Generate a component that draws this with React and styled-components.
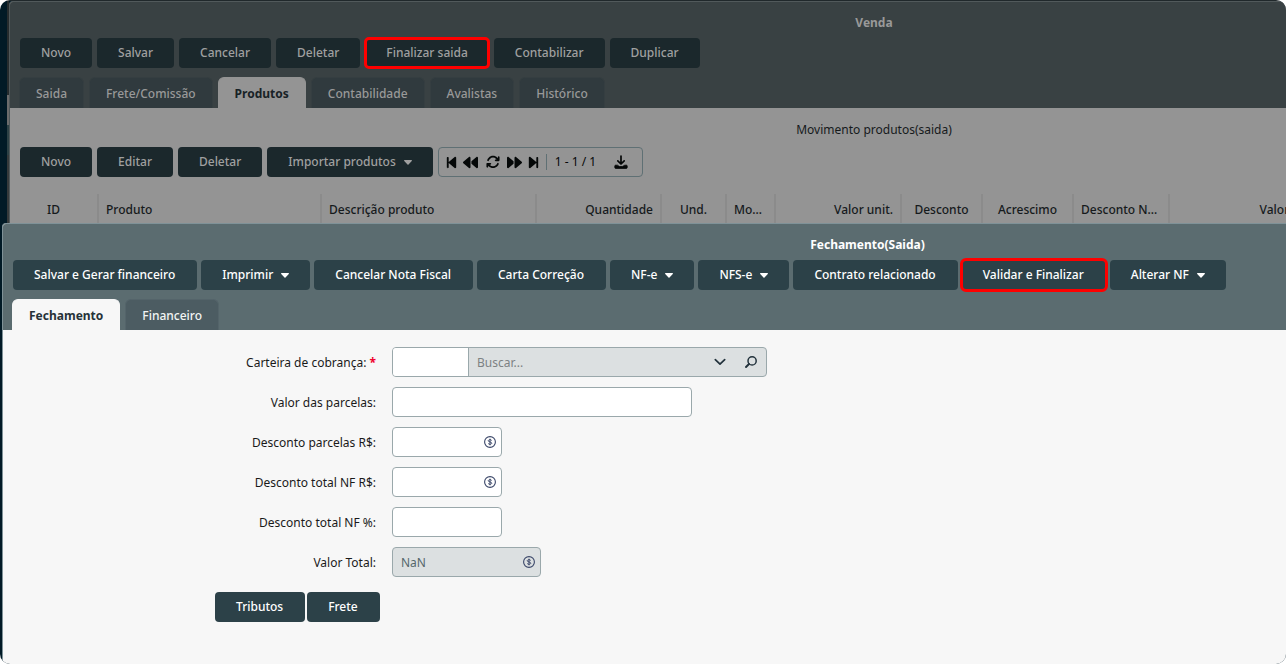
import React, { useState } from 'react'
import styled, { createGlobalStyle, css, ThemeProvider } from 'styled-components'
import { FaBackward, FaForward, FaBackwardStep, FaForwardStep, FaArrowsRotate } from 'react-icons/fa6'

const GlobalStyle = createGlobalStyle`
    * {
        box-sizing: border-box;
    }

    body {
        margin: 0;
        background: #fff;
        font-family: 'Noto Sans', sans-serif;
        font-size: 12px;
        line-height: 16px;
    }

    button, input {
        font: inherit;
    }
`

const dimmed = {
    header: '#394143',
    edge: '#51595b',
    body: '#949494',
    button: '#1b282c',
    buttonText: '#a0a0a0',
    title: '#999',
    tab: '#303a3e',
    tabEdge: '#353e41',
    tabText: '#999',
    activeText: '#182226',
    text: '#161a1c',
    buttonEnd: 21,
    markOffset: -2,
}

const normal = {
    header: '#5b6c70',
    edge: '#7f9298',
    body: '#f7f7f7',
    button: '#2c4148',
    buttonText: '#fff',
    title: '#fff',
    tab: '#4c5c62',
    tabEdge: '#54646a',
    tabText: '#f2f4f4',
    activeText: '#263238',
    text: '#1a1a1a',
    buttonEnd: 22,
    markOffset: -1,
}

const Desktop = styled.div`
    display: flex;
    flex-direction: column;
    min-height: 100vh;
    padding-top: 1px;
    border-radius: 10px;
    overflow: hidden;
    background: linear-gradient(#20282b, #20282b) 0 0 / 100% 1px no-repeat, #011a26;
`

const Window = styled.section`
    width: calc(100% + 444px);
    border-top: 1px solid ${({ theme }) => theme.edge};
    border-left: 1px solid ${({ theme }) => theme.edge};
    border-radius: 4px 0 0 0;
    background: ${({ theme }) => theme.body};
    color: ${({ theme }) => theme.text};
    overflow: hidden;
`

const BackRow = styled.div`
    display: flex;
    padding-left: 7px;
`

// slice of the page that stays visible beside the open window
const PageEdge = styled.div`
    flex: none;
    width: 2px;
    background: linear-gradient(
        #262c2e 94px, #6c6c6c 94px, #6c6c6c 124px,
        #2d4145 124px, #2d4145 154px, #363a3b 154px
    );
`

const BackWindow = styled(Window)`
    flex: none;
    width: calc(100% + 450px);
`

const FrontWindow = styled(Window)`
    flex: 1;
    margin-left: 2px;
`

const WindowHeader = styled.header`
    padding: 0 10px;
    background: ${({ theme }) => theme.header};
`

const Title = styled.h1`
    margin: 0;
    padding: 13px 0 7px;
    font-size: 12px;
    line-height: 16px;
    font-weight: 700;
    text-align: center;
    color: ${({ theme }) => theme.title};
`

const Toolbar = styled.div`
    display: flex;
    gap: ${({ $gap }) => $gap || 4}px;
`

const Button = styled.button`
    display: flex;
    align-items: center;
    gap: 8px;
    height: 30px;
    padding: 0 ${({ $menu, theme }) => $menu ? 21 : theme.buttonEnd}px 0 21px;
    border: 0;
    border-radius: 4px;
    background: ${({ theme }) => theme.button};
    color: ${({ theme }) => theme.buttonText};
    font-weight: 500;
    white-space: nowrap;
    cursor: pointer;

    ${({ $marked, theme }) => $marked && css`
        z-index: 1;
        outline: 3px solid #f00;
        outline-offset: ${theme.markOffset}px;
    `}
`

const Tabs = styled.div`
    display: flex;
    gap: 5px;
    margin-left: -1px;
    padding-top: 9px;
`

const Tab = styled.button`
    height: 31px;
    padding: 2px 16px 0;
    border: 1px solid ${({ theme }) => theme.tabEdge};
    border-bottom: 0;
    border-radius: 6px 6px 0 0;
    background: ${({ theme }) => theme.tab};
    color: ${({ theme }) => theme.tabText};
    font-weight: 500;
    cursor: pointer;

    ${({ $active, theme }) => $active && css`
        border-color: ${theme.body};
        background: ${theme.body};
        color: ${theme.activeText};
        font-weight: 700;
    `}
`

const GridTitle = styled.h2`
    margin: 0;
    padding: 14px 0 9px;
    font-size: 12px;
    line-height: 16px;
    font-weight: 400;
    text-align: center;
`

const GridToolbar = styled(Toolbar)`
    padding: 0 10px 17px;
`

const Pager = styled.div`
    display: flex;
    align-items: center;
    height: 30px;
    padding: 0 12px 0 6px;
    border: 1px solid #5f7074;
    border-radius: 4px;
    color: #050808;
`

const PagerButton = styled.button`
    display: flex;
    align-items: center;
    justify-content: center;
    width: ${({ $width }) => $width}px;
    height: 28px;
    padding: 0;
    border: 0;
    background: none;
    color: inherit;
    cursor: pointer;

    svg {
        flex: none;
    }
`

const PagerStatus = styled.span`
    margin-left: 5px;
    padding: 0 16px 0 8px;
    border-left: 1px solid #5f7074;
`

const Table = styled.table`
    table-layout: fixed;
    width: 1318px;
    border-collapse: separate;
    border-spacing: 0;
`

const HeadCell = styled.th`
    width: ${({ $width }) => $width}px;
    height: 29px;
    padding: 2px 7px 0;
    border-right: 2px solid #8b8b8b;
    font-weight: 500;
    text-align: ${({ $align }) => $align || 'left'};
    white-space: nowrap;
    overflow: hidden;
    text-overflow: ellipsis;
`

const Form = styled.form`
    display: grid;
    grid-template-columns: 373px 1fr;
    column-gap: 16px;
    row-gap: 10px;
    padding-top: 17px;
`

const Label = styled.label`
    padding-top: 1px;
    line-height: 29px;
    text-align: right;
`

const Required = styled.span`
    color: #f0002c;
    font-weight: 700;
`

const Field = styled.div`
    display: flex;
    align-items: center;
    width: ${({ $width }) => $width}px;
    height: 30px;
    padding-right: 5px;
    border: 1px solid #9aa8ab;
    border-radius: 4px;
    background: ${({ $disabled }) => $disabled ? '#dce0e1' : '#fff'};
    color: #3a4668;
    overflow: hidden;
`

const LookupField = styled(Field)`
    padding-right: 0;
`

const Input = styled.input`
    flex: 1;
    min-width: 0;
    height: 28px;
    padding: 0 8px;
    border: 0;
    outline: 0;
    background: none;
    color: #55676b;
`

const CodeInput = styled(Input)`
    flex: 0 0 76px;
    border-right: 1px solid #9aa8ab;
    background: #fff;
`

const SearchInput = styled(Input)`
    &::placeholder {
        color: #7d8284;
        opacity: 1;
    }
`

const FieldButton = styled.button`
    display: flex;
    align-items: center;
    justify-content: center;
    width: 31px;
    height: 28px;
    padding: 0;
    border: 0;
    background: none;
    color: #22323c;
    cursor: pointer;
`

const FormActions = styled(Toolbar)`
    padding: 15px 0 15px 212px;
`

const CaretIcon = () => (
    <svg width="8" height="5" viewBox="0 0 8 5" fill="currentColor">
        <path d="M.6 0h6.8c.5 0 .8.6.4 1L4.5 4.600a.7.7 0 0 1-1 0L.2 1C-.2.6.1 0 .6 0z" />
    </svg>
)

const ChevronIcon = () => (
    <svg width="12" height="12" viewBox="0 0 12 12" fill="none" stroke="currentColor" strokeWidth="1.7" strokeLinecap="round" strokeLinejoin="round">
        <path d="M1.300 3.600 6 8.200l4.700-4.600" />
    </svg>
)

const SearchIcon = () => (
    <svg width="12" height="12" viewBox="0 0 12 12" fill="none" stroke="currentColor" strokeWidth="1.5" strokeLinecap="round">
        <circle cx="7.100" cy="4.900" r="4.100" />
        <path d="M4 8 1 11" strokeWidth="1.9" />
    </svg>
)

const DownloadIcon = () => (
    <svg width="14" height="14" viewBox="0 0 14 14" fill="none" stroke="currentColor" strokeLinecap="round" strokeLinejoin="round">
        <path d="M7 1v7.5M3.8 5.8 7 9l3.2-3.2" strokeWidth="1.7" />
        <path d="M3.2 10.200H1.600a.8.8 0 0 0-.8.8v1.600a.8.8 0 0 0 .8.8h10.800a.8.8 0 0 0 .8-.8V11a.8.8 0 0 0-.8-.8h-1.600L8.400 11.500H5.600z" fill="currentColor" strokeWidth="0.8" />
    </svg>
)

const MoneyIcon = () => (
    <svg width="12" height="12" viewBox="0 0 12 12" fill="none" stroke="currentColor">
        <circle cx="6" cy="6" r="5.4" strokeWidth="1.1" />
        <path d="M7.7 4.5C7.4 3.9 6.8 3.7 6 3.7c-1 0-1.7.4-1.7 1.1C4.3 6.4 7.7 5.5 7.7 7.2c0 .7-.7 1.1-1.7 1.1-.9 0-1.5-.3-1.8-.9M6 2.7v6.6" strokeWidth="1" />
    </svg>
)

const saleActions = [
    { label: 'Novo' },
    { label: 'Salvar' },
    { label: 'Cancelar' },
    { label: 'Deletar' },
    { label: 'Finalizar saida', marked: true },
    { label: 'Contabilizar' },
    { label: 'Duplicar' },
]

const productActions = [
    { label: 'Novo' },
    { label: 'Editar' },
    { label: 'Deletar' },
    { label: 'Importar produtos', menu: true },
]

const closingActions = [
    { label: 'Salvar e Gerar financeiro' },
    { label: 'Imprimir', menu: true },
    { label: 'Cancelar Nota Fiscal' },
    { label: 'Carta Correção' },
    { label: 'NF-e', menu: true },
    { label: 'NFS-e', menu: true },
    { label: 'Contrato relacionado' },
    { label: 'Validar e Finalizar', marked: true },
    { label: 'Alterar NF', menu: true },
]

const columns = [
    { label: 'ID', width: 89, align: 'center' },
    { label: 'Produto', width: 223 },
    { label: 'Descrição produto', width: 215 },
    { label: 'Quantidade', width: 125, align: 'right' },
    { label: 'Und.', width: 65, align: 'center' },
    { label: 'Modelo', width: 49 },
    { label: 'Valor unit.', width: 126, align: 'right' },
    { label: 'Desconto', width: 81, align: 'center' },
    { label: 'Acrescimo', width: 91, align: 'center' },
    { label: 'Desconto NF %', width: 96 },
    { label: 'Valor total', width: 158, align: 'right' },
]

const Actions = ({ items }) => items.map(({ label, menu, marked }) => (
    <Button key={label} type="button" $menu={menu} $marked={marked}>
        {label}
        { menu && <CaretIcon /> }
    </Button>
))

const TabBar = ({ tabs, initial }) => {
    const [active, setActive] = useState(initial)

    return (
        <Tabs role="tablist">
            {tabs.map(tab => (
                <Tab
                    key={tab}
                    type="button"
                    role="tab"
                    aria-selected={tab === active}
                    $active={tab === active}
                    onClick={() => setActive(tab)}
                >
                    {tab}
                </Tab>
            ))}
        </Tabs>
    )
}

const SaleWindow = () => (
    <ThemeProvider theme={dimmed}>
        <BackRow>
            <PageEdge />
            <BackWindow>
                <WindowHeader>
                    <Title>Venda</Title>
                    <Toolbar $gap={5}>
                        <Actions items={saleActions} />
                    </Toolbar>
                    <TabBar
                        tabs={['Saida', 'Frete/Comissão', 'Produtos', 'Contabilidade', 'Avalistas', 'Histórico']}
                        initial="Produtos"
                    />
                </WindowHeader>
                <GridTitle>Movimento produtos(saida)</GridTitle>
                <GridToolbar $gap={5}>
                    <Actions items={productActions} />
                    <Pager>
                        <PagerButton type="button" aria-label="Primeiro" $width={14}><FaBackwardStep size={15} /></PagerButton>
                        <PagerButton type="button" aria-label="Anterior" $width={24}><FaBackward size={15} /></PagerButton>
                        <PagerButton type="button" aria-label="Atualizar" $width={20}><FaArrowsRotate size={14} /></PagerButton>
                        <PagerButton type="button" aria-label="Próximo" $width={24}><FaForward size={15} /></PagerButton>
                        <PagerButton type="button" aria-label="Último" $width={14}><FaForwardStep size={15} /></PagerButton>
                        <PagerStatus>1 - 1 / 1</PagerStatus>
                        <PagerButton type="button" aria-label="Baixar" $width={18}><DownloadIcon /></PagerButton>
                    </Pager>
                </GridToolbar>
                <Table>
                    <thead>
                        <tr>
                            {columns.map(({ label, width, align }) => (
                                <HeadCell key={label} $width={width} $align={align}>{label}</HeadCell>
                            ))}
                        </tr>
                    </thead>
                </Table>
            </BackWindow>
        </BackRow>
    </ThemeProvider>
)

const MoneyField = ({ id, width }) => (
    <Field $width={width}>
        <Input id={id} />
        <MoneyIcon />
    </Field>
)

const ClosingWindow = () => (
    <ThemeProvider theme={normal}>
        <FrontWindow>
            <WindowHeader>
                <Title>Fechamento(Saida)</Title>
                <Toolbar>
                    <Actions items={closingActions} />
                </Toolbar>
                <TabBar tabs={['Fechamento', 'Financeiro']} initial="Fechamento" />
            </WindowHeader>
            <Form>
                <Label htmlFor="carteira">Carteira de cobrança: <Required>*</Required></Label>
                <LookupField $width={375} $disabled>
                    <CodeInput id="carteira" />
                    <SearchInput placeholder="Buscar..." aria-label="Buscar carteira" />
                    <FieldButton type="button" aria-label="Abrir lista"><ChevronIcon /></FieldButton>
                    <FieldButton type="button" aria-label="Pesquisar"><SearchIcon /></FieldButton>
                </LookupField>

                <Label htmlFor="parcelas">Valor das parcelas:</Label>
                <Field $width={300}><Input id="parcelas" /></Field>

                <Label htmlFor="descontoParcelas">Desconto parcelas R$:</Label>
                <MoneyField id="descontoParcelas" width={110} />

                <Label htmlFor="descontoTotal">Desconto total NF R$:</Label>
                <MoneyField id="descontoTotal" width={110} />

                <Label htmlFor="descontoPercentual">Desconto total NF %:</Label>
                <Field $width={110}><Input id="descontoPercentual" /></Field>

                <Label htmlFor="total">Valor Total:</Label>
                <Field $width={149} $disabled>
                    <Input id="total" value="NaN" readOnly />
                    <MoneyIcon />
                </Field>
            </Form>
            <FormActions $gap={2}>
                <Actions items={[{ label: 'Tributos' }, { label: 'Frete' }]} />
            </FormActions>
        </FrontWindow>
    </ThemeProvider>
)

const App = () => (
    <>
        <GlobalStyle />
        <Desktop>
            <SaleWindow />
            <ClosingWindow />
        </Desktop>
    </>
)

export default App
